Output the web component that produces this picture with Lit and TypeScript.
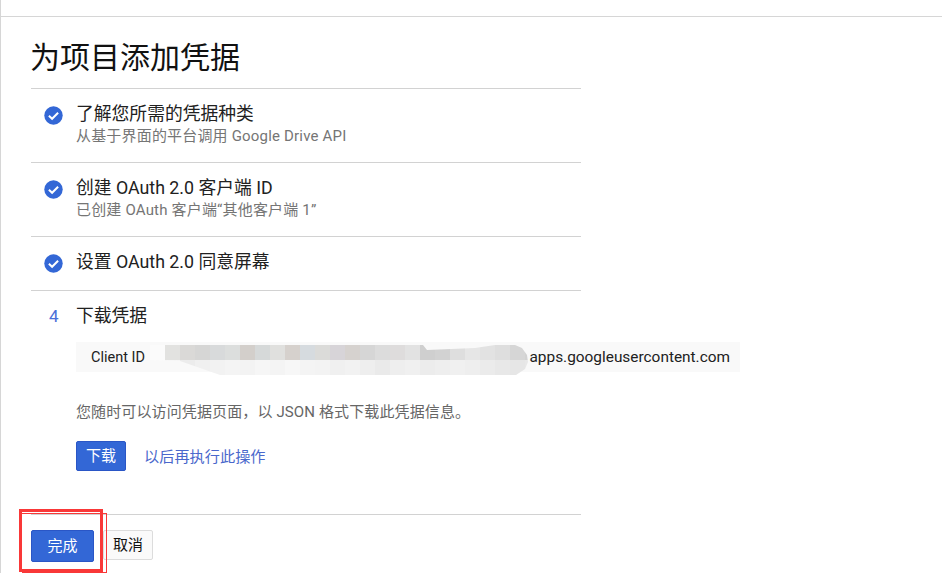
import { LitElement, html, css, svg } from 'lit';
import { customElement } from 'lit/decorators.js';

const FONT = css`Roboto, "Noto Sans CJK SC", sans-serif`;

// blurred-out client id, top row then the paler bottom row
const TOP = ['#fbfbfb', '#e2e2e0', '#dad9d7', '#d6d6d5', '#d8dadb', '#dcdedd', '#d3cfcb', '#d6d9d9', '#e0e0de', '#d6d1cd', '#d6dbdf', '#dbdbd9', '#d7d4d8', '#d6d2cf', '#d6d6d6', '#dcdcdc', '#dedcdc', '#e2e2e2', '#cfcfcf', '#d2d2d2', '#dedede', '#e6e6e6', '#e2e2e2', '#dedede', '#d6d6d6', '#d2d2d2'];
const BOTTOM = ['#fbfbfb', '#f6f6f6', '#ececec', '#f0f0f0', '#f2f2f2', '#f4f4f4', '#f3f3f3', '#f6f6f6', '#f4f4f4', '#f7f7f7', '#f4f4f4', '#f3f3f3', '#f0f0f0', '#f2f2f2', '#eeeeee', '#eaeaea', '#eeeeee', '#f0f0f0', '#ececec', '#eeeeee', '#f0f0f0', '#eeeeee', '#ebebeb', '#e8e8e8', '#e6e6e6', '#e8e8e8'];

@customElement('app-root')
export class AppRoot extends LitElement {
  static styles = css`
    :host {
      display: block;
      height: 573px;
      overflow: hidden;
      background: #fff;
      font-family: ${FONT};
      position: relative;
    }

    .page {
      margin-top: 16px;
      height: 557px;
      box-sizing: border-box;
      border-top: 1px solid #d6d6d6;
      border-left: 1px solid #d6d6d6;
      padding-left: 30px;
    }

    .edge {
      position: absolute;
      left: 0;
      top: 0;
      width: 1px;
      height: 16px;
      background: #d6d6d6;
    }

    h1 {
      margin: 0 0 0 -1px;
      height: 71px;
      box-sizing: border-box;
      padding-top: 23px;
      font-size: 30px;
      line-height: 36px;
      font-weight: 400;
      color: #111;
    }

    .list {
      width: 550px;
    }

    .step {
      display: flex;
      border-top: 1px solid #d2d2d2;
      padding-top: 14px;
      box-sizing: border-box;
    }

    .step.tall {
      height: 74px;
    }

    .step.short {
      height: 54px;
    }

    .marker {
      width: 45px;
      padding-left: 13px;
      box-sizing: border-box;
      flex: none;
      padding-top: 3px;
    }

    .marker svg {
      display: block;
      width: 19px;
      height: 19px;
    }

    .num {
      color: #4a6fd8;
      font-size: 17px;
      line-height: 22px;
      padding-left: 18px;
      width: 45px;
      box-sizing: border-box;
      flex: none;
    }

    .title {
      font-size: 17.8px;
      line-height: 22px;
      color: #212121;
    }

    .sub {
      font-size: 15px;
      letter-spacing: 0.18px;
      line-height: 18px;
      color: #757575;
      margin-top: 2px;
    }

    .last {
      height: 224px;
      display: block;
    }

    .last-head {
      display: flex;
    }

    .body {
      padding-left: 45px;
    }

    .code {
      position: relative;
      margin-top: 15px;
      width: 664px;
      height: 30px;
      background: #f9f9f9;
      box-sizing: border-box;
      padding: 0 10px 0 15px;
      display: flex;
      justify-content: space-between;
      align-items: center;
      font-size: 15.4px;
      color: #212121;
    }

    .label {
      font-size: 14.5px;
    }

    .blur {
      position: absolute;
      left: 74px;
      top: 3px;
      width: 378px;
      height: 30px;
      overflow: hidden;
      clip-path: polygon(0 0, 273px 0, 277px 5px, 325px 3px, 345px 0, 365px 0, 372px 3px, 377px 10px, 378px 17px, 375px 24px, 366px 30px, 70px 30px, 30px 16px, 0 15px);
    }

    .blur-row {
      display: flex;
    }

    .blur-row div {
      width: 15px;
      height: 15px;
      flex: none;
    }

    .note {
      margin-top: 30px;
      font-size: 15px;
      letter-spacing: 0.12px;
      line-height: 20px;
      color: #666;
    }

    .actions {
      display: flex;
      align-items: center;
      gap: 19px;
      margin-top: 19px;
    }

    button {
      font-family: inherit;
      font-size: 15px;
      border-radius: 2px;
      box-sizing: border-box;
      padding: 0 0 3px;
    }

    .primary {
      background: #3367d6;
      border: 1px solid #2a56c6;
      color: #fff;
    }

    .dl {
      width: 50px;
      height: 30px;
    }

    .later {
      color: #4a68cc;
      font-size: 15.2px;
      margin: -3px 0 0 -1px;
    }

    .footer {
      width: 550px;
      border-top: 1px solid #d2d2d2;
      padding-top: 15px;
      display: flex;
      gap: 9px;
    }

    .done {
      width: 63px;
      height: 32px;
    }

    .cancel {
      width: 50px;
      height: 30px;
      background: #fafafa;
      border: 1px solid #dcdcdc;
      color: #111;
    }

    .mark {
      position: absolute;
      box-sizing: border-box;
      pointer-events: none;
    }

    .mark.thick {
      left: 19px;
      top: 509px;
      width: 84px;
      height: 63px;
      border: 3px solid #f93838;
    }

    .mark.thin {
      left: 22px;
      top: 513px;
      width: 85px;
      height: 60px;
      border: 1px solid #f93838;
      border-left: none;
    }
  `;

  private check() {
    return html`<svg viewBox="0 0 19 19" aria-hidden="true">
      ${svg`<circle cx="9.5" cy="9.5" r="9.2" fill="#3367d6"></circle>
      <path d="M4.9 9.7l3.2 3.1 6-6.1" fill="none" stroke="#fff" stroke-width="2"></path>`}
    </svg>`;
  }

  private renderStep(title: string, sub: string, cls: string) {
    return html`
      <div class="step ${cls}">
        <div class="marker">${this.check()}</div>
        <div>
          <div class="title">${title}</div>
          ${sub ? html`<div class="sub">${sub}</div>` : ''}
        </div>
      </div>
    `;
  }

  render() {
    return html`
      <div class="edge"></div>
      <div class="page">
        <h1>为项目添加凭据</h1>
        <div class="list">
          ${this.renderStep('了解您所需的凭据种类', '从基于界面的平台调用 Google Drive API', 'tall')}
          ${this.renderStep('创建 OAuth 2.0 客户端 ID', '已创建 OAuth 客户端“其他客户端 1”', 'tall')}
          ${this.renderStep('设置 OAuth 2.0 同意屏幕', '', 'short')}
          <div class="step last">
            <div class="last-head">
              <div class="num">4</div>
              <div class="title">下载凭据</div>
            </div>
            <div class="body">
              <div class="code">
                <span class="label">Client ID</span>
                <span>apps.googleusercontent.com</span>
                <div class="blur">
                  <div class="blur-row">${TOP.map((c) => html`<div style="background:${c}"></div>`)}</div>
                  <div class="blur-row">${BOTTOM.map((c) => html`<div style="background:${c}"></div>`)}</div>
                </div>
              </div>
              <div class="note">您随时可以访问凭据页面，以 JSON 格式下载此凭据信息。</div>
              <div class="actions">
                <button class="primary dl">下载</button>
                <span class="later">以后再执行此操作</span>
              </div>
            </div>
          </div>
        </div>
        <div class="footer">
          <button class="primary done">完成</button>
          <button class="cancel">取消</button>
        </div>
      </div>
      <div class="mark thick"></div>
      <div class="mark thin"></div>
    `;
  }
}
